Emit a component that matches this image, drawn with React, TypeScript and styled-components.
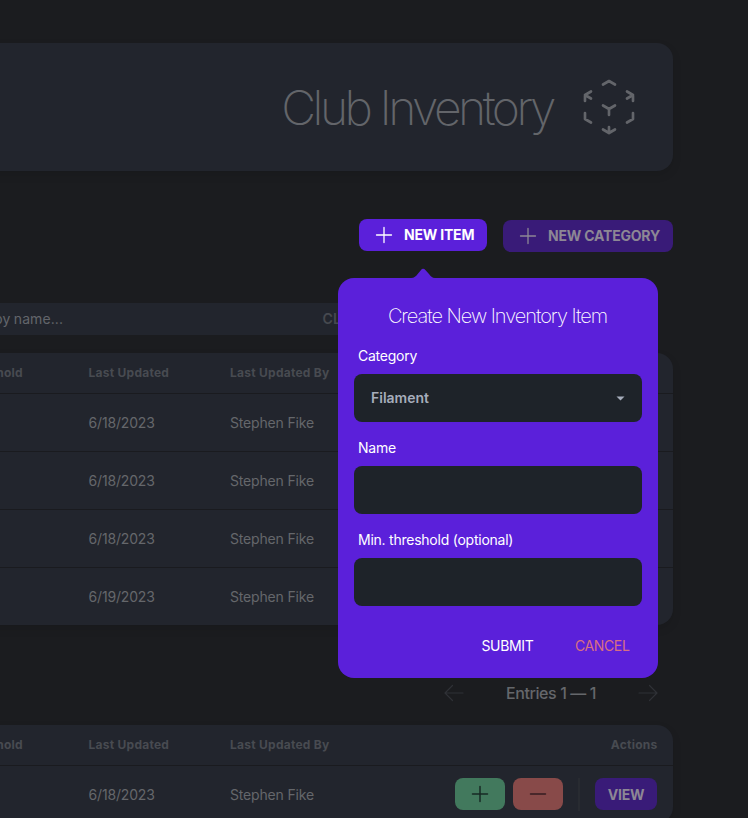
import React from "react";
import styled, { createGlobalStyle } from "styled-components";

const GlobalStyle = createGlobalStyle`
  * { box-sizing: border-box; }
  body {
    margin: 0;
    background: #1b1c1f;
    font-family: Inter, "Liberation Sans", sans-serif;
    -webkit-font-smoothing: antialiased;
  }
  button, input { font-family: inherit; }
`;

const Viewport = styled.div`
  width: 748px;
  height: 818px;
  overflow: hidden;
`;

const Page = styled.main`
  width: 773px;
  margin-left: -100px;
  padding-top: 43px;
`;

const Banner = styled.header`
  display: flex;
  align-items: center;
  justify-content: flex-end;
  gap: 24px;
  height: 128px;
  padding-right: 32px;
  border-radius: 16px;
  background: #22252d;
  color: #63656a;
  box-shadow: 0 4px 10px rgba(0, 0, 0, 0.1);
`;

const Title = styled.h1`
  margin: 1px 0 0;
  font-size: 48px;
  line-height: 48px;
  font-weight: 170;
  letter-spacing: -3.5px;
`;

const Toolbar = styled.div`
  display: flex;
  justify-content: flex-end;
  gap: 16px;
  margin-top: 48px;
  height: 33px;
`;

const Anchor = styled.div`
  position: relative;
`;

const PrimaryButton = styled.button<{ $width: number; $dim?: boolean }>`
  display: flex;
  align-items: center;
  width: ${(p) => p.$width}px;
  height: 32px;
  margin-top: ${(p) => (p.$dim ? 1 : 0)}px;
  padding: 0 0 0 13px;
  gap: 8px;
  border: 0;
  border-radius: 8px;
  background: ${(p) => (p.$dim ? "#391b78" : "#5b20da")};
  color: ${(p) => (p.$dim ? "#8d8795" : "#ffffff")};
  font-size: 14px;
  font-weight: 700;
  letter-spacing: -0.2px;
  white-space: nowrap;
`;

const ButtonLabel = styled.span`
  padding-bottom: 1px;
`;

const SearchBar = styled.div`
  display: flex;
  align-items: center;
  justify-content: space-between;
  width: 480px;
  height: 32px;
  margin-top: 51px;
  padding: 0 11px 1px 57px;
  background: #22252d;
  color: #63656b;
  font-size: 14px;
  letter-spacing: 0.1px;
  word-spacing: -0.7px;
  white-space: nowrap;
`;

const ClearLabel = styled.span`
  color: #46494f;
  font-weight: 600;
`;

const Table = styled.section<{ $gap: number }>`
  margin-top: ${(p) => p.$gap}px;
  border-radius: 16px;
  background: #22252d;
  box-shadow: 0 4px 10px rgba(0, 0, 0, 0.1);
`;

const HeadRow = styled.div`
  display: grid;
  grid-template-columns: 127.5px 141.5px 1fr auto;
  align-items: center;
  height: 40px;
  padding: 0 15.5px 2px 61px;
  color: #484b51;
  font-size: 12px;
  font-weight: 700;
  letter-spacing: 0.26px;
`;

const Row = styled.div`
  display: grid;
  grid-template-columns: 127.5px 141.5px 1fr auto;
  align-items: center;
  height: 58px;
  padding: 0 16px 0 61px;
  border-top: 1px solid #1a1b1f;
  color: #65676b;
  font-size: 14px;
  letter-spacing: -0.17px;
`;

const Actions = styled.div`
  display: flex;
  align-items: center;
  margin-top: -1px;
`;

const ActionButton = styled.button<{ $tone: "add" | "remove" | "view" }>`
  display: flex;
  align-items: center;
  justify-content: center;
  width: ${(p) => (p.$tone === "view" ? 62 : 50)}px;
  height: 32px;
  padding: 0;
  margin-left: ${(p) => (p.$tone === "remove" ? 8 : 0)}px;
  border: 0;
  border-radius: 8px;
  background: ${(p) => ({ add: "#42795d", remove: "#884a49", view: "#391b78" })[p.$tone]};
  color: ${(p) => ({ add: "#172a24", remove: "#351d21", view: "#8d8795" })[p.$tone]};
  font-size: 14px;
  font-weight: 700;
  letter-spacing: -0.2px;
`;

const Divider = styled.span`
  width: 2px;
  height: 33px;
  margin: 0 15px;
  background: #282b31;
`;

const Pagination = styled.nav`
  display: flex;
  align-items: center;
  justify-content: space-between;
  width: 218px;
  height: 24px;
  margin: 56px 13px 0 auto;
  color: #65676b;
  font-size: 16px;
  font-weight: 500;
  letter-spacing: -0.4px;
`;

const Popover = styled.form`
  position: absolute;
  z-index: 2;
  top: 59px;
  left: -21px;
  display: flex;
  flex-direction: column;
  width: 320px;
  height: 400px;
  padding: 26px 16px 16px;
  border-radius: 16px;
  background: #5b20da;
  color: #ffffff;
`;

const Pointer = styled.svg`
  position: absolute;
  top: -10px;
  left: 73px;
`;

const PopoverTitle = styled.h2`
  margin: 0 1px 18px 0;
  font-size: 20px;
  line-height: 24px;
  font-weight: 200;
  letter-spacing: -1.03px;
  text-align: center;
`;

const Field = styled.label`
  display: flex;
  flex-direction: column;
  gap: 8px;
  margin-bottom: 16px;
`;

const FieldLabel = styled.span`
  padding-left: 4px;
  font-size: 14px;
  line-height: 20px;
  letter-spacing: -0.24px;
`;

const SelectBox = styled.div`
  display: flex;
  align-items: center;
  justify-content: space-between;
  height: 48px;
  padding: 0 17px 1px;
  border-radius: 8px;
  background: #1e2329;
  color: #a6adbb;
  font-size: 14px;
  font-weight: 600;
`;

const Caret = styled.svg`
  margin-top: 2px;
`;

const TextInput = styled.input`
  height: 48px;
  padding: 0 16px;
  border: 0;
  border-radius: 8px;
  background: #1e2329;
  color: #a6adbb;
`;

const FormActions = styled.div`
  display: flex;
  justify-content: flex-end;
  gap: 41.5px;
  margin-top: 7px;
  padding-right: 12.5px;
`;

const TextButton = styled.button<{ $danger?: boolean }>`
  height: 32px;
  padding: 0;
  border: 0;
  background: none;
  color: ${(p) => (p.$danger ? "#d86f83" : "#ffffff")};
  font-size: 14px;
  letter-spacing: -0.35px;
`;

const CubeIcon = () => (
  <svg width="64" height="64" viewBox="0 0 24 24" fill="none" stroke="currentColor" strokeWidth="1" strokeLinecap="round" strokeLinejoin="round">
    <path d="m21 7.5-2.25-1.313M21 7.5v2.25m0-2.25-2.25 1.313M3 7.5l2.25-1.313M3 7.5l2.25 1.313M3 7.5v2.25m9 3 2.25-1.313M12 12.75l-2.25-1.313M12 12.75V15m0 6.75 2.25-1.313M12 21.75V19.5m0 2.25-2.25-1.313m0-16.875L12 2.25l2.25 1.313M21 14.25v2.25l-2.25 1.313m-13.5 0L3 16.5v-2.25" />
  </svg>
);

const LineIcon = ({ d, width = 1.5 }: { d: string; width?: number }) => (
  <svg width="24" height="24" viewBox="0 0 24 24" fill="none" stroke="currentColor" strokeWidth={width} strokeLinecap="round" strokeLinejoin="round">
    <path d={d} />
  </svg>
);

const PLUS = "M12 4.5v15M4.5 12h15";
const MINUS = "M4.5 12h15";
const LEFT = "M10.5 19.5 3 12m0 0 7.5-7.5M3 12h18";
const RIGHT = "M13.5 4.5 21 12m0 0-7.5 7.5M21 12H3";

const PageArrow = styled.span`
  display: flex;
  color: #2f3136;
`;

const TableHead = () => (
  <HeadRow>
    <span>Threshold</span>
    <span>Last Updated</span>
    <span>Last Updated By</span>
    <span>Actions</span>
  </HeadRow>
);

const DataRow = ({ date, children }: { date: string; children?: React.ReactNode }) => (
  <Row>
    <span />
    <span>{date}</span>
    <span>Stephen Fike</span>
    {children}
  </Row>
);

const dates = ["6/18/2023", "6/18/2023", "6/18/2023", "6/19/2023"];

export default function App() {
  return (
    <Viewport>
      <GlobalStyle />
      <Page>
        <Banner>
          <Title>Club Inventory</Title>
          <CubeIcon />
        </Banner>
        <Toolbar>
          <Anchor>
            <PrimaryButton $width={128}>
              <LineIcon d={PLUS} width={1.3} />
              <ButtonLabel>NEW ITEM</ButtonLabel>
            </PrimaryButton>
            <Popover>
              <Pointer width="24" height="11" viewBox="0 0 24 11" fill="#5b20da">
                <path d="M0 11V10C3.5 10 4.8 8.2 6.5 6.3L9.8 2.2Q12-.6 14.6 2.2L18.2 6.3C19.8 8.2 21 10 24 10V11Z" />
              </Pointer>
              <PopoverTitle>Create New Inventory Item</PopoverTitle>
              <Field as="div">
                <FieldLabel>Category</FieldLabel>
                <SelectBox>
                  Filament
                  <Caret width="9" height="5" viewBox="0 0 9 5" fill="currentColor">
                    <path d="M.5.5h8l-4 4Z" />
                  </Caret>
                </SelectBox>
              </Field>
              <Field>
                <FieldLabel>Name</FieldLabel>
                <TextInput />
              </Field>
              <Field>
                <FieldLabel>Min. threshold (optional)</FieldLabel>
                <TextInput />
              </Field>
              <FormActions>
                <TextButton type="button">SUBMIT</TextButton>
                <TextButton type="button" $danger>CANCEL</TextButton>
              </FormActions>
            </Popover>
          </Anchor>
          <PrimaryButton $width={170} $dim>
            <LineIcon d={PLUS} width={1.3} />
            <ButtonLabel>NEW CATEGORY</ButtonLabel>
          </PrimaryButton>
        </Toolbar>
        <SearchBar>
          <span>Filter by name...</span>
          <ClearLabel>CLEAR</ClearLabel>
        </SearchBar>
        <Table $gap={18}>
          <TableHead />
          {dates.map((date, i) => (
            <DataRow key={i} date={date} />
          ))}
        </Table>
        <Pagination>
          <PageArrow><LineIcon d={LEFT} width={1.2} /></PageArrow>
          <span>Entries 1 — 1</span>
          <PageArrow><LineIcon d={RIGHT} width={1.2} /></PageArrow>
        </Pagination>
        <Table $gap={20}>
          <TableHead />
          <DataRow date="6/18/2023">
            <Actions>
              <ActionButton $tone="add"><LineIcon d={PLUS} /></ActionButton>
              <ActionButton $tone="remove"><LineIcon d={MINUS} /></ActionButton>
              <Divider />
              <ActionButton $tone="view">VIEW</ActionButton>
            </Actions>
          </DataRow>
        </Table>
      </Page>
    </Viewport>
  );
}
